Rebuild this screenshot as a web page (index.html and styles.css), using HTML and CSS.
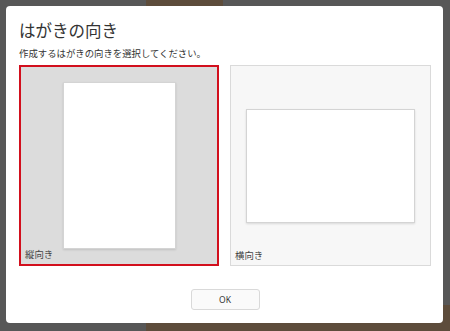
FILE: index.html
```html
<!DOCTYPE html>
<html lang="ja">
<head>
    <meta charset="UTF-8">
    <title>はがきの向き</title>
    <link rel="stylesheet" href="styles.css">
</head>
<body>
    <!-- Orientation dialog -->
    <div class="dialog">
        <h1 class="title">はがきの向き</h1>
        <p class="lead">作成するはがきの向きを選択してください。</p>

        <div class="choices">
            <div class="choice selected">
                <div class="paper portrait"></div>
                <span class="choice-label">縦向き</span>
            </div>
            <div class="choice">
                <div class="paper landscape"></div>
                <span class="choice-label">横向き</span>
            </div>
        </div>

        <div class="actions">
            <button class="btn">OK</button>
        </div>
    </div>
</body>
</html>
```

FILE: styles.css
```css
* {
    margin: 0;
    padding: 0;
    box-sizing: border-box;
}

body {
    width: 450px;
    height: 331px;
    overflow: hidden;
    font-family: 'Noto Sans CJK JP', 'Noto Sans', sans-serif;
    color: #333;
    background:
        linear-gradient(#5d4c3b, #5d4c3b) 146px 0 / 77px 100% no-repeat,
        linear-gradient(#5d4c3b, #5d4c3b) 223px 305px / 227px 26px no-repeat,
        #575757;
    padding: 6px 7px 8px 6px;
}

/* Dialog */
.dialog {
    width: 437px;
    height: 317px;
    background: #fff;
    border-radius: 4px;
    padding: 0 12px 0 13px;
    display: flex;
    flex-direction: column;
}

.title {
    font-size: 16.5px;
    font-weight: normal;
    line-height: 20px;
    margin-top: 14px;
}

.lead {
    font-size: 9.4px;
    line-height: 14px;
    margin-top: 6px;
}

/* Orientation choices */
.choices {
    display: flex;
    gap: 11px;
    margin-top: 5px;
}

.choice {
    position: relative;
    width: 201px;
    height: 201px;
    background: #f7f7f7;
    border: 1px solid #dadada;
    display: flex;
    align-items: center;
    justify-content: center;
}

.choice.selected {
    width: 200px;
    background: #dcdcdc;
    border: 2px solid #d20f1d;
}

.paper {
    background: #fff;
    border: 1px solid #d4d4d4;
    box-shadow: 0 1px 2px rgba(0, 0, 0, 0.12);
}

.paper.portrait {
    width: 113px;
    height: 167px;
}

.paper.landscape {
    width: 169px;
    height: 114px;
}

.choice-label {
    position: absolute;
    left: 4px;
    bottom: 4px;
    font-size: 9.4px;
    line-height: 12px;
    color: #444;
}

/* Footer */
.actions {
    display: flex;
    justify-content: center;
    margin-top: 23px;
}

.btn {
    width: 69px;
    height: 21px;
    background: #fafafa;
    border: 1px solid #d9d9d9;
    border-radius: 3px;
    font-family: 'Noto Sans', sans-serif;
    font-size: 8.5px;
    color: #333;
}
```
